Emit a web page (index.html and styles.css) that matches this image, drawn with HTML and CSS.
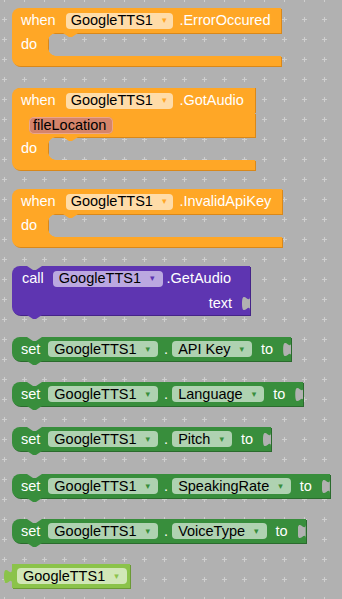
FILE: index.html
```html
<!DOCTYPE html>
<html>
<head>
<meta charset="utf-8">
<link rel="stylesheet" href="styles.css">
</head>
<body>
<div class="workspace">
  <svg class="grid" width="342" height="599" aria-hidden="true">
    <defs>
      <pattern id="plus" width="20" height="20" patternUnits="userSpaceOnUse" x="-6" y="9">
        <rect x="8" y="10" width="5" height="1" fill="#cfcfcf"/>
        <rect x="10" y="8" width="1" height="5" fill="#cfcfcf"/>
      </pattern>
    </defs>
    <rect width="342" height="599" fill="url(#plus)"/>
  </svg>

  <div class="blocks">
    <div class="ev ev1">
      <div class="ev-head"><span class="lbl">when</span><span class="field f-or">GoogleTTS1<span class="arr">▾</span></span><span class="lbl ev-name">.ErrorOccured</span></div>
      <div class="ev-mid"><span class="lbl do">do</span><span class="slot"><i class="bump"></i></span></div>
      <div class="ev-foot"></div>
    </div>

    <div class="ev ev2">
      <div class="ev-head"><span class="lbl">when</span><span class="field f-or">GoogleTTS1<span class="arr">▾</span></span><span class="lbl ev-name">.GotAudio</span></div>
      <div class="ev-param"><span class="param">fileLocation</span></div>
      <div class="ev-mid"><span class="lbl do">do</span><span class="slot"><i class="bump"></i></span></div>
      <div class="ev-foot"></div>
    </div>

    <div class="ev ev3">
      <div class="ev-head"><span class="lbl">when</span><span class="field f-or">GoogleTTS1<span class="arr">▾</span></span><span class="lbl ev-name">.InvalidApiKey</span></div>
      <div class="ev-mid"><span class="lbl do">do</span><span class="slot"><i class="bump"></i></span></div>
      <div class="ev-foot"></div>
    </div>

    <div class="call">
      <div class="call-r1"><span class="lbl">call</span><span class="field f-pu">GoogleTTS1<span class="arr">▾</span></span><span class="lbl call-name">.GetAudio</span></div>
      <div class="call-r2"><span class="lbl">text</span></div>
    </div>

    <div class="set s1"><span class="lbl">set</span><span class="field f-gr">GoogleTTS1<span class="arr">▾</span></span><span class="lbl dot">.</span><span class="field f-gr">API Key<span class="arr">▾</span></span><span class="lbl to">to</span></div>
    <div class="set s2"><span class="lbl">set</span><span class="field f-gr">GoogleTTS1<span class="arr">▾</span></span><span class="lbl dot">.</span><span class="field f-gr">Language<span class="arr">▾</span></span><span class="lbl to">to</span></div>
    <div class="set s3"><span class="lbl">set</span><span class="field f-gr">GoogleTTS1<span class="arr">▾</span></span><span class="lbl dot">.</span><span class="field f-gr">Pitch<span class="arr">▾</span></span><span class="lbl to">to</span></div>
    <div class="set s4"><span class="lbl">set</span><span class="field f-gr">GoogleTTS1<span class="arr">▾</span></span><span class="lbl dot">.</span><span class="field f-gr">SpeakingRate<span class="arr">▾</span></span><span class="lbl to">to</span></div>
    <div class="set s5"><span class="lbl">set</span><span class="field f-gr">GoogleTTS1<span class="arr">▾</span></span><span class="lbl dot">.</span><span class="field f-gr">VoiceType<span class="arr">▾</span></span><span class="lbl to">to</span></div>

    <div class="comp"><span class="field f-lg">GoogleTTS1<span class="arr">▾</span></span></div>
  </div>
</div>
</body>
</html>
```

FILE: styles.css
```css
html, body {
  margin: 0;
  padding: 0;
}
body {
  background: #b1b1b1;
  font-family: "Liberation Sans", Arial, sans-serif;
  font-size: 14.5px;
  line-height: 1;
}
.workspace {
  position: relative;
  width: 342px;
  height: 599px;
  overflow: hidden;
}
.grid {
  position: absolute;
  left: 0;
  top: 0;
}
.blocks {
  position: relative;
  display: flex;
  flex-direction: column;
  align-items: flex-start;
  padding: 8px 0 0 12px;
}
.lbl {
  color: #fff;
  white-space: nowrap;
}
.field {
  display: inline-flex;
  align-items: center;
  height: 16px;
  padding: 0 8px 0 6px;
  border-radius: 4px;
  color: #000;
  white-space: nowrap;
}
.arr {
  font-family: "DejaVu Sans", sans-serif;
  font-size: 9px;
  margin-left: 9px;
}
.f-or { background: #ffdca8; margin-left: 10px; padding: 0 7px 0 5px; }
.f-or .arr { color: #ffa726; }
.f-pu { background: #bba8e0; margin-left: 9px; }
.f-pu .arr { color: #5e35b1; }
.f-gr { background: #afd2b1; margin-left: 8px; }
.f-gr .arr { color: #388e3c; }
.f-lg { background: #d1e7b7; }
.f-lg .arr { color: #8bc34a; }
.ev-name { margin-left: 6px; }
.call-name { margin-left: 4px; }

/* ---------- event blocks ---------- */
.ev {
  display: flex;
  flex-direction: column;
}
.ev1 { margin-bottom: 22px; }
.ev2 { margin-bottom: 19px; }
.ev3 { margin-bottom: 19px; }
.ev-head {
  display: flex;
  align-items: center;
  height: 25px;
  padding: 0 11px 0 9px;
  background: #ffa726;
  border-radius: 8px 0 0 0;
  box-shadow: 1px 1px 0 #d9881a;
}
.ev2 .ev-head { box-shadow: 1px 0 0 #d9881a; }
.ev-param {
  display: flex;
  align-items: center;
  height: 24px;
  padding-left: 17px;
  background: #ffa726;
  box-shadow: 1px 1px 0 #d9881a;
}
.param {
  display: inline-flex;
  align-items: center;
  height: 17px;
  padding: 0 7px 0 4px;
  border-radius: 5px;
  background: #d5846a;
  box-shadow: inset 0 0 0 1px #eba68b;
  color: #000;
}
.ev-mid {
  display: flex;
  height: 23px;
}
.do {
  display: flex;
  align-items: center;
  width: 27px;
  padding-left: 9px;
  background: #ffa726;
  box-shadow: 1px 0 0 #d9881a;
}
.slot {
  position: relative;
  flex: 1;
}
.slot::before,
.slot::after {
  content: "";
  position: absolute;
  left: 0;
  width: 8px;
  height: 8px;
}
.slot::before {
  top: 0;
  background: radial-gradient(circle at 100% 100%, transparent 7.5px, #ffa726 8px);
}
.slot::after {
  bottom: 0;
  background: radial-gradient(circle at 100% 0, transparent 7.5px, #ffa726 8px);
}
.bump {
  position: absolute;
  left: 15px;
  top: 0;
  width: 15px;
  height: 4px;
  background: #ffa726;
  clip-path: polygon(0 0, 100% 0, 60% 100%, 40% 100%);
}
.ev-foot {
  height: 10px;
  background: #ffa726;
  border-radius: 0 0 0 8px;
  box-shadow: 1px 1px 0 #d9881a;
}

/* ---------- call block ---------- */
.call {
  position: relative;
  width: 238px;
  margin-bottom: 22px;
  background: #5e35b1;
  border-radius: 8px 0 0 8px;
  box-shadow: 1px 1px 0 #452488;
}
.call-r1 {
  display: flex;
  align-items: center;
  height: 25px;
  padding-left: 10px;
}
.call-r2 {
  display: flex;
  align-items: center;
  justify-content: flex-end;
  height: 24px;
  padding-right: 18px;
}
.call::before,
.set::before {
  content: "";
  position: absolute;
  left: 15px;
  top: 0;
  width: 15px;
  height: 4px;
  background: #b1b1b1;
  clip-path: polygon(0 0, 100% 0, 60% 100%, 40% 100%);
}
.call::after,
.set::after {
  content: "";
  position: absolute;
  left: 15px;
  bottom: -4px;
  width: 15px;
  height: 4px;
  clip-path: polygon(0 0, 100% 0, 60% 100%, 40% 100%);
}
.call::after { background: #5e35b1; }
.call-r2::after,
.set .to::after {
  content: "";
  position: absolute;
  right: 0;
  width: 8px;
  height: 15px;
  background: #b1b1b1;
  clip-path: path("M8,0 C8,10 0,-8 0,7.5 S8,5 8,15 Z");
}
.call-r2::after { bottom: 4px; }

/* ---------- set blocks ---------- */
.set {
  position: relative;
  display: flex;
  align-items: center;
  height: 24px;
  padding: 0 18px 0 9px;
  background: #388e3c;
  border-radius: 8px 0 0 8px;
  box-shadow: 1px 1px 0 #2a6b2d;
}
.set::after { background: #388e3c; }
.set .to { margin-left: 9px; }
.set .to::after { top: 5px; }
.dot { margin-left: 6px; }
.set .dot + .field { margin-left: 4px; }
.s1, .s2, .s4 { margin-bottom: 21px; }
.s3 { margin-bottom: 23px; }
.s5 { margin-bottom: 21px; }

/* ---------- component block ---------- */
.comp {
  position: relative;
  display: flex;
  align-items: center;
  height: 24px;
  padding: 0 3px 0 5px;
  background: #8bc34a;
  box-shadow: 1px 1px 0 #6b9a36;
}
.comp::before {
  content: "";
  position: absolute;
  left: -8px;
  top: 5px;
  width: 8px;
  height: 15px;
  background: #8bc34a;
  clip-path: path("M8,0 C8,10 0,-8 0,7.5 S8,5 8,15 Z");
}
```
